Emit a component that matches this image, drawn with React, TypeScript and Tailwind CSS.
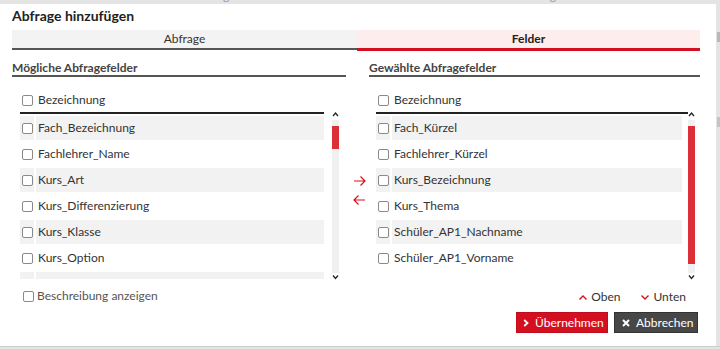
import React from "react";

const Box = () => (
  <span className="block w-[11px] h-[11px] border border-[#8a8a8a] rounded-[2px] bg-white shrink-0" />
);

function Row({ label, shaded, textW }: { label: string; shaded: boolean; textW: string }) {
  const bg = shaded ? "bg-[#f2f2f2]" : "bg-white";
  return (
    <div className="flex gap-[2px] h-[24px] shrink-0">
      <div className={`w-[14px] flex items-center justify-center ${bg}`}>
        <Box />
      </div>
      <div className={`${textW} flex items-center pl-[2px] text-[12px] text-[#333] whitespace-nowrap ${bg}`}>
        {label}
      </div>
    </div>
  );
}

function ScrollBar({ thumb }: { thumb: string }) {
  return (
    <div className="w-[7px] flex flex-col items-center shrink-0">
      <svg width="7" height="6" viewBox="0 0 7 6">
        <path d="M1 5 L3.5 2 L6 5" fill="none" stroke="#222" strokeWidth="1.3" />
      </svg>
      <div className="w-[7px] h-[153px] bg-[#f0f0f0] mt-[3px] pt-[6px]">
        <div className={`w-[7px] bg-[#dc3039] ${thumb}`} />
      </div>
      <svg width="7" height="6" viewBox="0 0 7 6" className="mt-[1px]">
        <path d="M1 1.5 L3.5 4.5 L6 1.5" fill="none" stroke="#222" strokeWidth="1.3" />
      </svg>
    </div>
  );
}

function Header({ w }: { w: string }) {
  return (
    <div className={`${w} h-[26px] flex items-center gap-[2px] border-b-2 border-[#222]`}>
      <div className="w-[14px] flex justify-center">
        <Box />
      </div>
      <span className="pl-[2px] text-[12px] text-[#333]">Bezeichnung</span>
    </div>
  );
}

const leftItems = [
  "Fach_Bezeichnung",
  "Fachlehrer_Name",
  "Kurs_Art",
  "Kurs_Differenzierung",
  "Kurs_Klasse",
  "Kurs_Option",
  "",
];

const rightItems = [
  "Fach_Kürzel",
  "Fachlehrer_Kürzel",
  "Kurs_Bezeichnung",
  "Kurs_Thema",
  "Schüler_AP1_Nachname",
  "Schüler_AP1_Vorname",
];

export default function App() {
  return (
    <div className="w-[720px] h-[349px] bg-[#e4e4e4] flex flex-col overflow-hidden font-['Lato',sans-serif] text-[#333]">
      {/* page behind the dialog */}
      <div className="h-[4px] shrink-0 overflow-hidden">
        <div className="flex -mt-[11px] text-[12px] text-[#9a9a9a] leading-[14px]">
          <span className="ml-[162px]">Bezeichnung</span>
          <span className="ml-[36px]">Filter</span>
          <span className="ml-[192px]">Beschreibung</span>
        </div>
      </div>

      <div className="flex shrink-0">
        {/* dialog */}
        <div className="w-[716px] h-[342px] bg-white flex flex-col pl-[12px] pr-[16px]">
          <div className="pt-[2px] h-[22px] leading-[20px] text-[14px] font-bold text-[#222]">
            Abfrage hinzufügen
          </div>

          {/* tabs */}
          <div className="flex items-start mt-[4px]">
            <div className="w-[345px] h-[20px] bg-[#f3f3f3] border-b-2 border-[#555] flex items-center justify-center text-[12px] text-[#333]">
              Abfrage
            </div>
            <div className="flex-1 h-[21px] bg-[#fdeded] border-b-[3px] border-[#d40f1f] flex items-center justify-center text-[12px] font-bold text-[#222]">
              Felder
            </div>
          </div>

          {/* columns */}
          <div className="flex items-start mt-[9px]">
            {/* left */}
            <div className="w-[334px] flex flex-col">
              <div className="h-[17px] border-b-2 border-[#555] text-[12px] font-bold text-[#444] leading-[15px]">
                Mögliche Abfragefelder
              </div>
              <div className="flex items-start pl-[8px] gap-[8px] mt-[11px]">
                <div className="w-[304px] flex flex-col">
                  <Header w="w-[304px]" />
                  <div className="h-[165px] overflow-hidden flex flex-col gap-[2px] pt-[2px]">
                    {leftItems.map((l, i) => (
                      <Row key={i} label={l} shaded={i % 2 === 0} textW="w-[288px]" />
                    ))}
                  </div>
                </div>
                <div className="mt-[23px]">
                  <ScrollBar thumb="h-[23px]" />
                </div>
              </div>
              <div className="flex items-center gap-[3px] pl-[11px] mt-[8px] h-[16px]">
                <Box />
                <span className="text-[12px] text-[#555]">Beschreibung anzeigen</span>
              </div>
            </div>

            {/* middle arrows */}
            <div className="w-[23px] flex flex-col items-center pl-[3px] pt-[115px] gap-[7px]">
              <svg width="13" height="12" viewBox="0 0 13 12">
                <path d="M1 6 H12 M7.5 1.5 L12 6 L7.5 10.5" fill="none" stroke="#d40f1f" strokeWidth="1.2" />
              </svg>
              <svg width="13" height="12" viewBox="0 0 13 12">
                <path d="M12 6 H1 M5.5 1.5 L1 6 L5.5 10.5" fill="none" stroke="#d40f1f" strokeWidth="1.2" />
              </svg>
            </div>

            {/* right */}
            <div className="flex-1 flex flex-col">
              <div className="h-[17px] border-b-2 border-[#555] text-[12px] font-bold text-[#444] leading-[15px]">
                Gewählte Abfragefelder
              </div>
              <div className="flex items-start pl-[7px] mt-[11px]">
                <div className="w-[312px] flex flex-col">
                  <Header w="w-[312px]" />
                  <div className="h-[165px] overflow-hidden flex flex-col gap-[2px] pt-[2px]">
                    {rightItems.map((l, i) => (
                      <Row key={l} label={l} shaded={i % 2 === 0} textW="w-[290px]" />
                    ))}
                  </div>
                </div>
                <div className="mt-[23px]">
                  <ScrollBar thumb="h-[138px]" />
                </div>
              </div>
              <div className="flex items-center justify-end pr-[14px] mt-[9px] h-[16px] text-[12px] text-[#333]">
                <svg width="10" height="7" viewBox="0 0 10 7" className="mr-[3px]">
                  <path d="M1.5 5.5 L5 2 L8.5 5.5" fill="none" stroke="#d40f1f" strokeWidth="1.4" />
                </svg>
                <span>Oben</span>
                <svg width="10" height="7" viewBox="0 0 10 7" className="ml-[20px] mr-[3px]">
                  <path d="M1.5 1.5 L5 5 L8.5 1.5" fill="none" stroke="#d40f1f" strokeWidth="1.4" />
                </svg>
                <span>Unten</span>
              </div>
            </div>
          </div>

          {/* buttons */}
          <div className="flex justify-end gap-[6px] pr-[2px] mt-[7px]">
            <button className="h-[21px] w-[92px] bg-[#d40f1f] border border-[#c00d1b] text-white text-[12px] flex items-center pl-[6px] gap-[6px]">
              <svg width="6" height="8" viewBox="0 0 6 8">
                <path d="M1.2 1 L4.5 4 L1.2 7" fill="none" stroke="#fff" strokeWidth="1.8" />
              </svg>
              <span>Übernehmen</span>
            </button>
            <button className="h-[21px] w-[84px] bg-[#474747] border border-[#333] text-white text-[12px] flex items-center pl-[7px] gap-[6px]">
              <svg width="8" height="8" viewBox="0 0 8 8">
                <path d="M1 1 L7 7 M7 1 L1 7" fill="none" stroke="#fff" strokeWidth="2" />
              </svg>
              <span>Abbrechen</span>
            </button>
          </div>
        </div>

        {/* page right of the dialog */}
        <div className="flex-1 flex flex-col">
          <div className="mt-[28px] ml-[1px] w-[3px] h-[10px] bg-[#b8b8b8]" />
          <div className="mt-[75px] ml-[1px] w-[3px] h-[10px] bg-[#c4c4c4]" />
        </div>
      </div>
      <div className="h-[1px] bg-[#cfcfcf] shrink-0" />
    </div>
  );
}
